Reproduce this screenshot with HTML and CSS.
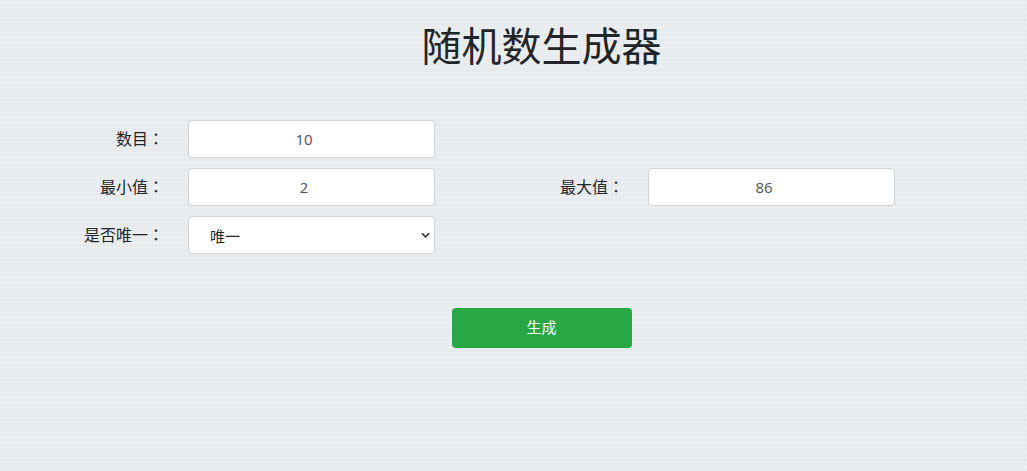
FILE: index.html
```html
<!DOCTYPE html>
<html lang="zh-CN">
<head>
<meta charset="utf-8">
<title>随机数生成器</title>
<link rel="stylesheet" href="styles.css">
</head>
<body>
<div class="page">
  <h1 class="title">随机数生成器</h1>
  <form class="form">
    <label class="label">数目<span class="colon" lang="zh-TW">：</span></label>
    <input class="field" type="number" value="10">
    <span class="spacer"></span>
    <span class="label"></span>
    <span class="empty"></span>

    <label class="label">最小值<span class="colon" lang="zh-TW">：</span></label>
    <input class="field" type="number" value="2">
    <span class="spacer"></span>
    <label class="label">最大值<span class="colon" lang="zh-TW">：</span></label>
    <input class="field" type="number" value="86">

    <label class="label">是否唯一<span class="colon" lang="zh-TW">：</span></label>
    <select class="field select">
      <option>唯一</option>
      <option>不唯一</option>
    </select>
  </form>
  <div class="actions">
    <button class="btn" type="button">生成</button>
  </div>
</div>
</body>
</html>
```
FILE: styles.css
```css
html, body {
  margin: 0;
  padding: 0;
}
body {
  background-color: #e8ebee;
  background-image: radial-gradient(circle, rgba(255,255,255,0.55) 0.6px, transparent 0.9px);
  background-size: 4px 5px;
  font-family: "Open Sans", "Noto Sans CJK SC", sans-serif;
  color: #212529;
  height: 471px;
  overflow: hidden;
}
.page {
  padding-left: 56px;
}
.title {
  margin: 20px 0 0;
  text-align: center;
  font-family: "Noto Sans CJK SC", sans-serif;
  font-size: 40px;
  font-weight: 400;
  line-height: 48px;
  color: #212529;
}
.form {
  margin-top: 52px;
  display: grid;
  grid-template-columns: 108px 247px 33px 108px 247px;
  column-gap: 24px;
  row-gap: 10px;
  align-items: center;
}
.label {
  text-align: right;
  font-family: "Noto Sans CJK SC", sans-serif;
  font-size: 16px;
  line-height: 20px;
  padding-bottom: 2px;
  color: #212529;
  white-space: nowrap;
}
.colon {
  font-family: "Noto Sans CJK TC", sans-serif;
}
.field {
  box-sizing: border-box;
  width: 247px;
  height: 38px;
  border: 1px solid #ced4da;
  border-radius: 4px;
  background: #fff;
  font-family: "Open Sans", "Noto Sans CJK SC", sans-serif;
  font-size: 15px;
  color: #495057;
  text-align: center;
  padding: 0 12px;
  outline: none;
}
.field::-webkit-inner-spin-button {
  opacity: 0;
  width: 15px;
}
.select {
  -webkit-appearance: none;
  appearance: none;
  text-align: left;
  padding-left: 21px;
  font-family: "Noto Sans CJK SC", sans-serif;
  color: #212529;
  background-image: url("data:image/svg+xml,%3Csvg xmlns='http://www.w3.org/2000/svg' width='10' height='6' viewBox='0 0 10 6'%3E%3Cpath d='M1 1l4 4 4-4' fill='none' stroke='%23333' stroke-width='1.8'/%3E%3C/svg%3E");
  background-repeat: no-repeat;
  background-position: right 4px center;
  background-size: 9px 6px;
}
.actions {
  margin-top: 54px;
  display: flex;
  justify-content: center;
}
.btn {
  width: 180px;
  height: 40px;
  border: none;
  border-radius: 4px;
  background: #28a745;
  color: #fff;
  font-family: "Noto Sans CJK SC", sans-serif;
  font-size: 15px;
  padding: 0 0 3px;
  cursor: pointer;
}
```
